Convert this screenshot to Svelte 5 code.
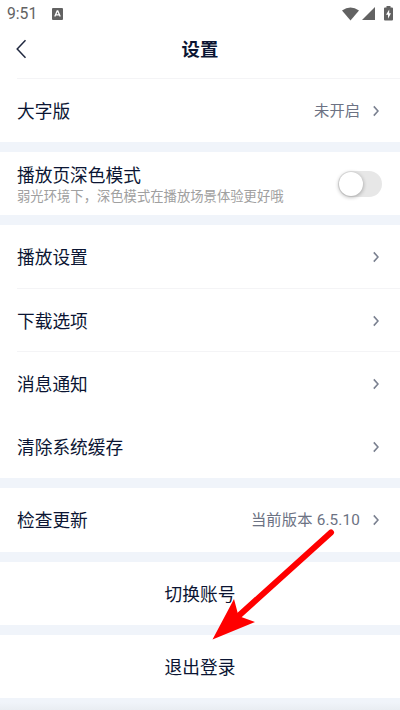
<script>
	const playback = ["播放设置", "下载选项", "消息通知", "清除系统缓存"];
</script>

<style>
	:global(body) {
		background: #fff;
		overflow: hidden;
	}
	.page {
		position: relative;
		display: flex;
		flex-direction: column;
		gap: 10px;
		width: 400px;
		height: 710px;
		overflow: hidden;
		box-sizing: border-box;
		background: #f0f4fa;
		color: #0b1533;
		font-family: Roboto, "Noto Sans CJK SC", sans-serif;
		font-size: 17.7px;
	}
	.top, .card {
		background: #fff;
		flex: none;
	}
	.status {
		display: flex;
		align-items: center;
		height: 27px;
		padding: 0 7px;
		color: #626262;
		font-size: 15.7px;
	}
	.status .badge {
		margin-left: 15px;
	}
	.status .wifi {
		margin-left: auto;
	}
	.status svg {
		display: block;
	}
	.signal {
		margin-left: 3px;
	}
	.battery {
		margin-left: 9px;
	}
	.nav {
		display: grid;
		grid-template-columns: 40px 1fr 40px;
		align-items: center;
		height: 43px;
		padding-bottom: 8px;
	}
	.nav svg {
		display: block;
		margin-left: 15px;
	}
	h1 {
		margin: 0;
		text-align: center;
		font-size: 18.4px;
		font-weight: 600;
		line-height: 43px;
		padding-top: 1px;
		height: 42px;
	}
	.row {
		display: flex;
		align-items: center;
		height: 63.25px;
		box-sizing: border-box;
		margin-left: 17px;
		padding-right: 21px;
	}
	.line {
		border-bottom: 1px solid #f4f4f6;
		padding-top: 2px;
	}
	.line:nth-child(3), .line:nth-child(4) {
		border-bottom-color: #fff;
	}
	.first {
		height: 64px;
		border-top: 1px solid #f4f4f6;
	}
	.label {
		flex: 1;
		line-height: 26px;
		padding-top: 2px;
	}
	.value {
		margin-right: 13px;
		color: #6c7283;
		font-size: 15.3px;
		line-height: 22px;
		padding-top: 1px;
	}
	.version {
		letter-spacing: 0.15px;
	}
	.hint {
		color: #a0a0a0;
		font-size: 13.33px;
		line-height: 18px;
		margin-top: -1px;
	}
	.dark {
		padding-right: 18px;
	}
	.dark .label {
		padding-top: 2px;
	}
	.switch {
		width: 44px;
		height: 26px;
		border-radius: 13px;
		background: #e7e7e7;
	}
	.knob {
		width: 24px;
		height: 24px;
		margin: 1px;
		border-radius: 50%;
		background: #fff;
		box-shadow: 0 1px 4px #0005;
	}
	.center {
		height: 63.2px;
		line-height: 66px;
		text-align: center;
	}
	.arrow {
		position: absolute;
		left: 0;
		top: 0;
		pointer-events: none;
	}
	.foot {
		flex: 1;
		margin-top: -6px;
		background: linear-gradient(#f0f4fa, #e9edf2);
	}
</style>

{#snippet chevron()}
	<svg width="6" height="12" viewBox="0 0 6 12" fill="none" stroke="#7a8090" stroke-width="1.6">
		<path d="M.8 1.4L5 6L.8 10.6" />
	</svg>
{/snippet}

<div class="page">
	<div class="top">
		<div class="status">
			<span>9:51</span>
			<svg class="badge" width="11" height="12" viewBox="0 0 11 12">
				<rect width="11" height="12" rx="1" fill="#626262" />
				<path d="M2.8 8.5L5.2 3H5.8L8.2 8.5M3.8 6.8H7.2" fill="none" stroke="#fff" stroke-width="1.3" />
			</svg>
			<svg class="wifi" width="17" height="14" viewBox="0 0 17 14" fill="#626262">
				<path d="M0 3.6Q8.5-2.8 17 3.6L8.5 13.5Z" />
			</svg>
			<svg class="signal" width="13" height="13" viewBox="0 0 13 13" fill="#626262">
				<path d="M13 0V13H0Z" />
			</svg>
			<svg class="battery" width="9" height="15" viewBox="0 0 9 15">
				<path d="M2.5 0H6.5V1.5H8Q9 1.5 9 2.5V13.5Q9 14.5 8 14.5H1Q0 14.5 0 13.5V2.5Q0 1.5 1 1.5H2.5Z" fill="#626262" />
				<path d="M5.2 3.5L2 8.8H4V12.8L7 7.3H5.2Z" fill="#fff" />
			</svg>
		</div>
		<div class="nav">
			<svg width="12" height="20" viewBox="0 0 12 20" fill="none" stroke="#20283f" stroke-width="1.5">
				<path d="M10.5 1.2L2.2 10L10.5 18.8" />
			</svg>
			<h1>设置</h1>
		</div>
		<div class="row first">
			<span class="label">大字版</span>
			<span class="value">未开启</span>
			{@render chevron()}
		</div>
	</div>

	<div class="card">
		<div class="row dark">
			<div class="label">
				<div>播放页深色模式</div>
				<div class="hint">弱光环境下，深色模式在播放场景体验更好哦</div>
			</div>
			<div class="switch"><div class="knob"></div></div>
		</div>
	</div>

	<div class="card">
		{#each playback as item}
			<div class="row line">
				<span class="label">{item}</span>
				{@render chevron()}
			</div>
		{/each}
	</div>

	<div class="card">
		<div class="row">
			<span class="label">检查更新</span>
			<span class="value version">当前版本 6.5.10</span>
			{@render chevron()}
		</div>
	</div>

	<div class="card center">切换账号</div>
	<div class="card center">退出登录</div>
	<div class="foot"></div>

	<svg class="arrow" width="400" height="710" viewBox="0 0 400 710">
		<path d="M331 532.5L234 620" stroke="#f00" stroke-width="6" stroke-linecap="round" />
		<path d="M212.5 639.5L234 599L238.5 616L255 622Z" fill="#f00" />
	</svg>
</div>
